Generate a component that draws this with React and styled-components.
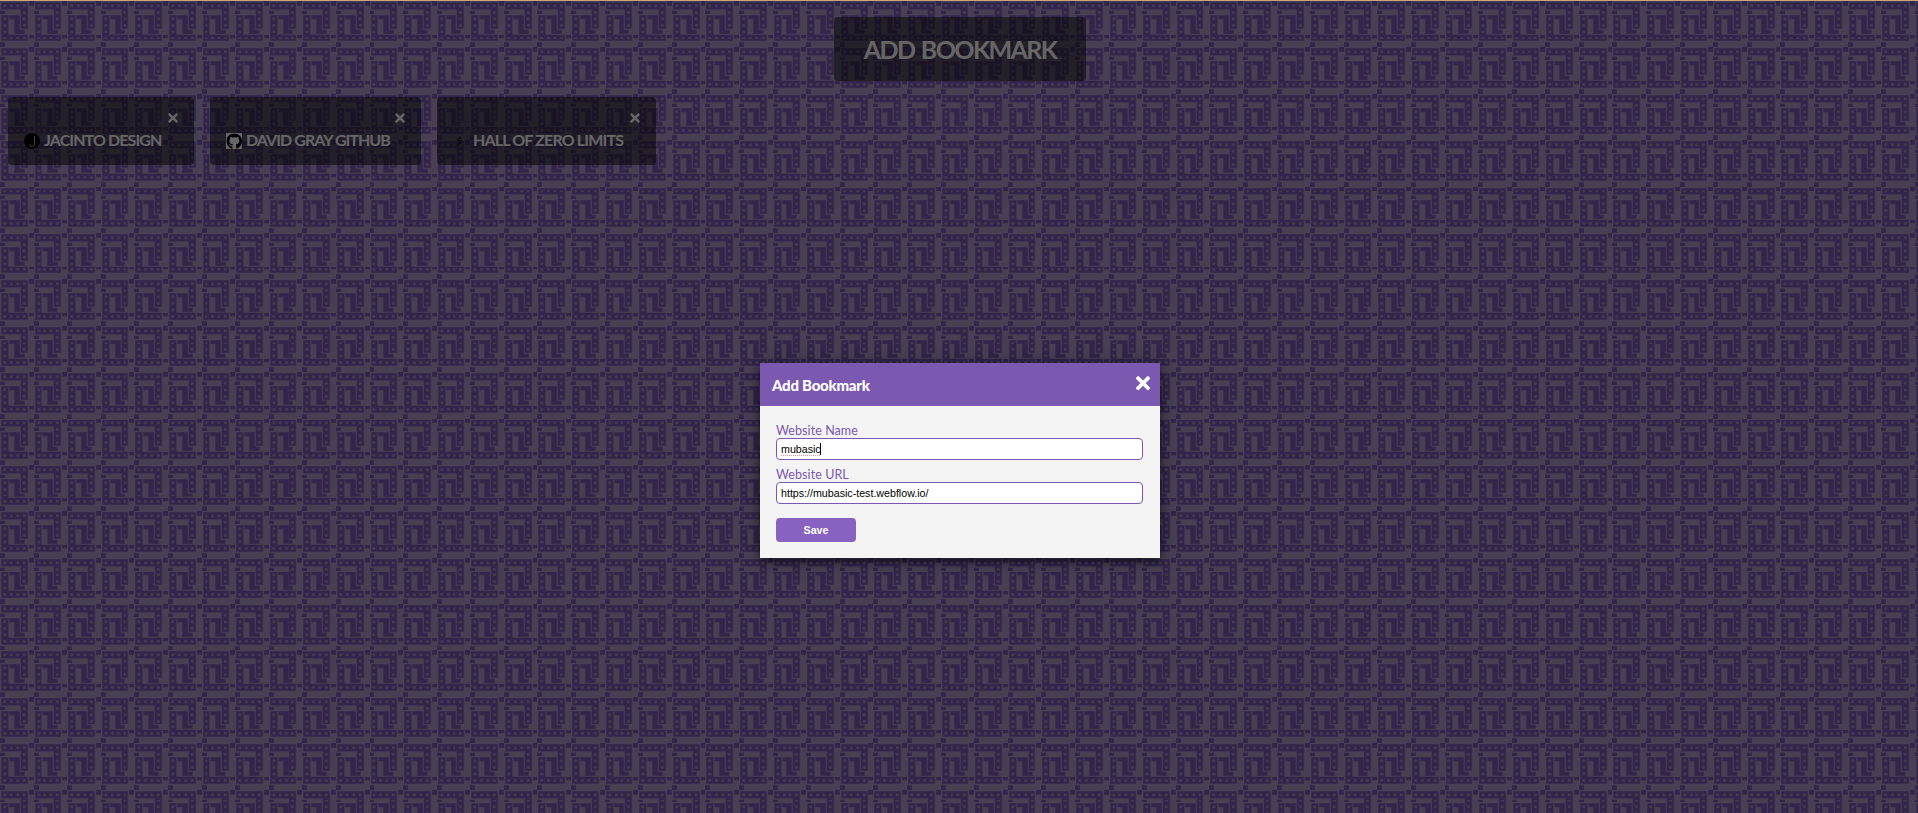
import React from 'react';
import styled, { createGlobalStyle } from 'styled-components';
import { FaTimes, FaGithub } from 'react-icons/fa';

const rivets = [
  [6, 6], [14, 6], [22, 6], [30, 6], [30, 14], [30, 22], [30, 30],
  [6, 22], [6, 30], [6, 38], [6, 46], [14, 46], [22, 46], [30, 46],
].map(([x, y]) => `<circle cx="${x}" cy="${y}" r="2"/>`).join('');

const arms = 'M2 2h32v32h-8V10H2zM2 18h8v24h24v8H2z';
const step = 'M12 18h12v18h6v4H18V22h-6z';

const tile = `<svg xmlns="http://www.w3.org/2000/svg" width="42" height="58" viewBox="0 0 42 58"><rect width="42" height="58" fill="#b49dcf"/><path d="${arms}${step}" fill="none" stroke="#9b7dc6" stroke-width="1.4"/><path fill="#7e5ab8" d="M36 0h6v6h-6zM0 12h6v4H0zM36 42h6v4h-6zM0 52h6v6H0z${step}${arms}"/><g fill="#ab90cc">${rivets}</g></svg>`;

const Global = createGlobalStyle`
  * { box-sizing: border-box; }
  body { margin: 0; overflow: hidden; font-family: Lato, sans-serif; }
`;

const Page = styled.div`
  height: 813px;
  display: flex;
  flex-direction: column;
`;
const TopLine = styled.div`
  height: 1px;
  flex: none;
  background: #caa27c;
`;
const Desk = styled.main`
  flex: 1;
  padding-top: 16px;
  background: url('data:image/svg+xml,${encodeURIComponent(tile)}') 0 0 / 33.6px 46.4px;
`;
const Panel = styled.div`
  background: rgba(6, 9, 6, 0.51);
  color: #fff;
  border-radius: 4px;
  font-weight: 700;
  text-transform: uppercase;
  white-space: nowrap;
`;
const Title = styled(Panel)`
  width: 252px;
  height: 64px;
  margin: 0 auto 16px;
  transform: translateX(1px);
  display: flex;
  align-items: center;
  justify-content: center;
  font-size: 25px;
  letter-spacing: -1.6px;
  word-spacing: 2px;
`;
const Cards = styled.div`
  display: flex;
  gap: 16px;
  padding-left: 8px;
`;
const Card = styled(Panel)`
  width: ${(p) => p.$width}px;
  height: 68px;
  padding: 14px 16px 0 16px;
  display: flex;
  flex-direction: column;
`;
const CardClose = styled(FaTimes)`
  align-self: flex-end;
  width: 10px;
  height: 14px;
  margin-bottom: 2px;
  flex: none;
`;
const Link = styled.a`
  display: flex;
  align-items: center;
  gap: 4px;
  height: 24px;
  font-size: 16px;
  letter-spacing: ${(p) => p.$spacing}px;
`;
const Favicon = styled.span`
  width: 16px;
  height: 16px;
  flex: none;
  margin-top: 4px;
  display: flex;
  svg { width: 16px; height: 16px; }
`;
const Backdrop = styled.div`
  position: absolute;
  inset: 1px 0 0;
  background: rgba(0, 0, 0, 0.6);
  display: flex;
  flex-direction: column;
  align-items: center;
  padding-top: 362px;
  padding-left: 2px;
`;
const Modal = styled.div`
  width: 400px;
  height: 195px;
  background: #f4f4f4;
  box-shadow: 0 3px 6px rgba(0, 0, 0, 0.4), 0 2px 16px rgba(0, 0, 0, 0.4);
`;
const ModalHead = styled.div`
  height: 43px;
  padding: 0 10px 0 12px;
  display: flex;
  justify-content: space-between;
  background: #7c59b0;
  color: #fff;
  font-size: 15px;
  font-weight: 900;
  line-height: 44px;
  letter-spacing: -0.25px;
`;
const ModalClose = styled(FaTimes)`
  width: 14px;
  height: 20.4px;
  margin-top: 10px;
`;
const Form = styled.div`
  padding: 16px 17px 0 16px;
  display: flex;
  flex-direction: column;
`;
const Label = styled.label`
  height: 16px;
  line-height: 17px;
  font-size: 12.5px;
  letter-spacing: 0.08px;
  color: #7c59b0;
`;
const Field = styled.div`
  height: 22px;
  margin-bottom: 6px;
  padding: 0 4px;
  display: flex;
  align-items: center;
  background: #fff;
  border: 1px solid #7c59b0;
  border-radius: 4px;
  color: #000;
  font-family: 'Liberation Sans', Arial, sans-serif;
  font-size: 10.67px;
`;
const Misspelt = styled.span`
  text-decoration: underline dotted rgba(230, 60, 60, 0.55) 1px;
  text-underline-offset: 2px;
`;
const Caret = styled.span`
  width: 1px;
  height: 12px;
  margin-left: -1px;
  background: #000;
`;
const Save = styled.button`
  width: 80px;
  height: 24px;
  margin-top: 8px;
  padding: 0;
  border: 0;
  border-radius: 4px;
  background: #8762c0;
  color: #fff;
  font: 700 10.67px 'Liberation Sans', Arial, sans-serif;
`;

const JacintoMark = () => (
  <svg viewBox="0 0 16 16">
    <circle cx="8" cy="8" r="8" fill="#000" />
    <path d="M10.500 3v7.400a2.500 2.500 0 0 1-5 1" fill="none" stroke="#b8aab0" strokeWidth="1" />
  </svg>
);
const GithubMark = () => (
  <svg viewBox="0 0 16 16">
    <rect width="16" height="16" fill="#fff" />
    <FaGithub x="0.3" y="0.3" width="15.4" height="15.4" color="#000" />
  </svg>
);
const ZeroMark = () => (
  <svg viewBox="0 0 16 16">
    <path d="M7.500 3.500L4.500 7.500h4L5.500 12.500M6 5.500h2.500M5 10h2.500" fill="none" stroke="#000" strokeWidth="0.9" />
  </svg>
);

const bookmarks = [
  { name: 'Jacinto Design', width: 186, spacing: -0.9, Mark: JacintoMark },
  { name: 'David Gray Github', width: 211, spacing: -0.95, Mark: GithubMark },
  { name: 'Hall of Zero Limits', width: 219, spacing: -0.84, Mark: ZeroMark },
];

export default function App() {
  return (
    <Page>
      <Global />
      <TopLine />
      <Desk>
        <Title as="h1">Add Bookmark</Title>
        <Cards>
          {bookmarks.map(({ name, width, spacing, Mark }) => (
            <Card key={name} $width={width}>
              <CardClose />
              <Link $spacing={spacing}>
                <Favicon><Mark /></Favicon>
                {name}
              </Link>
            </Card>
          ))}
        </Cards>
      </Desk>
      <Backdrop>
        <Modal>
          <ModalHead>Add Bookmark<ModalClose /></ModalHead>
          <Form>
            <Label>Website Name</Label>
            <Field><Misspelt>mubasic</Misspelt><Caret /></Field>
            <Label>Website URL</Label>
            <Field>https://mubasic-test.webflow.io/</Field>
            <Save>Save</Save>
          </Form>
        </Modal>
      </Backdrop>
    </Page>
  );
}
